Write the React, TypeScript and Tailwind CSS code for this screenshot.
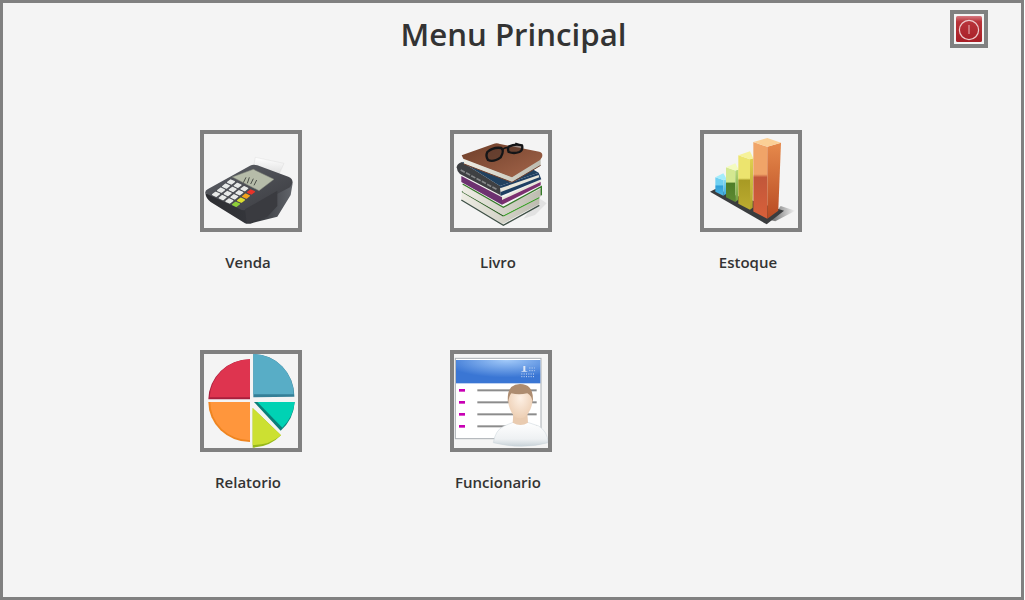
import React from "react";

// Helper: a rounded key on the payment terminal
function Key({ x, y, fill }: { x: number; y: number; fill: string }) {
  return (
    <path
      d={`M${x - 10} ${y + 1} L${x - 1} ${y - 6} L${x + 10} ${y - 1} L${x + 1} ${y + 6} Z`}
      fill={fill}
      stroke={fill}
      strokeWidth="4"
      strokeLinejoin="round"
    />
  );
}

function PosIcon() {
  const keys: React.ReactNode[] = [];
  const colored = ["#e8342a", "#f2a31c", "#dde030", "#8fd03a"];
  for (let i = 0; i < 4; i++) {
    for (let j = 0; j < 4; j++) {
      const x = 123 + j * 20 - i * 15;
      const y = 186 + j * 10 + i * 12.3;
      keys.push(<Key key={`${i}-${j}`} x={x} y={y} fill={j === 3 ? colored[i] : "#e8eae8"} />);
    }
  }
  return (
    <svg viewBox="42 42 282 282" className="w-full h-full">
      <defs>
        <linearGradient id="posBody" x1="0" y1="0" x2="1" y2="1">
          <stop offset="0" stopColor="#5d6066" />
          <stop offset="1" stopColor="#3a3b40" />
        </linearGradient>
        <linearGradient id="posFront" x1="0" y1="0" x2="1" y2="0">
          <stop offset="0" stopColor="#2c2d31" />
          <stop offset="0.6" stopColor="#36383d" />
          <stop offset="1" stopColor="#62656b" />
        </linearGradient>
        <linearGradient id="posPaper" x1="0" y1="0" x2="0" y2="1">
          <stop offset="0" stopColor="#ffffff" />
          <stop offset="1" stopColor="#d8d8d8" />
        </linearGradient>
      </defs>
      <path d="M196 112 L282 130 L262 174 L188 152 Z" fill="url(#posPaper)" stroke="#d0d0d0" />
      <path d="M46 220 Q48 236 62 246 L165 310 Q175 314 190 308 L262 290 L302 225 L308 190 L170 240 Z" fill="url(#posFront)" />
      <path d="M46 220 Q44 212 54 207 L180 137 Q190 132 202 136 L295 170 Q308 175 308 188 L300 202 L172 268 Q160 274 148 266 Z" fill="url(#posBody)" />
      <path d="M165 268 L262 212 L262 258 L232 290 L170 310 Z" fill="#3a3b40" />
      <path d="M127 171 L190 148 L252 178 L207 212 Z" fill="#b6bca9" stroke="#80857a" strokeWidth="1.5" />
      <g stroke="#4a4e48" strokeWidth="3" fill="none">
        <path d="M168 172 L160 188 M178 172 L172 190 M190 176 L182 192 M200 180 L192 196" />
      </g>
      {keys}
    </svg>
  );
}

function BooksIcon() {
  return (
    <svg viewBox="42 42 282 282" className="w-full h-full">
      <defs>
        <linearGradient id="brownCover" x1="0" y1="0" x2="1" y2="1">
          <stop offset="0" stopColor="#6e3f2a" />
          <stop offset="1" stopColor="#a4654a" />
        </linearGradient>
        <linearGradient id="pagesBook" x1="0" y1="0" x2="1" y2="0">
          <stop offset="0" stopColor="#eeede4" />
          <stop offset="1" stopColor="#bdbcb0" />
        </linearGradient>
      </defs>
      <path d="M298 235 L320 250 L285 285 L250 296 Z" fill="#e2e2e2" />
      {/* bottom book */}
      <path d="M64 238 L188 312 L298 252 L298 232 L190 285 L66 212 Z" fill="url(#pagesBook)" />
      <path d="M64 240 L190 316 L298 256" fill="none" stroke="#3f5046" strokeWidth="4" />
      <path d="M190 288 L298 232" fill="none" stroke="#36a024" strokeWidth="4" />
      <path d="M66 214 L190 288" fill="none" stroke="#2f5f28" strokeWidth="4" />
      {/* green book */}
      <path d="M68 192 L190 262 L304 205 L304 228 L190 286 L68 216 Z" fill="url(#pagesBook)" />
      <path d="M68 192 L190 262 L304 200 L304 226" fill="none" stroke="#357a28" strokeWidth="4" />
      {/* purple book */}
      <path d="M66 170 L190 232 L302 178 L302 195 L190 252 L66 188 Z" fill="#e8e6da" />
      <path d="M64 168 L186 232 L186 254 L64 186 Z" fill="#6d3270" />
      <path d="M186 254 L302 196 L302 186 L186 240 Z" fill="#7b2f70" />
      {/* dark book */}
      <path d="M50 142 Q50 132 66 126 L180 198 L182 226 L60 162 Q50 152 50 142 Z" fill="#3e4043" />
      <path d="M62 150 L170 208" fill="none" stroke="#86888a" strokeWidth="5" strokeDasharray="14 4" />
      <path d="M180 198 L296 158 L304 178 L182 228 Z" fill="#1f3f62" />
      <path d="M180 205 L296 165 L298 172 L182 216 Z" fill="#e8e6da" />
      <path d="M66 126 L180 198 L296 158 L230 120 Z" fill="#21415f" />
      {/* top book */}
      <path d="M70 114 L216 170 L302 112 L302 136 L216 187 L72 132 Z" fill="url(#pagesBook)" />
      <path d="M65 106 L160 72 Q170 68 180 72 L298 95 Q310 98 306 112 L300 120 L216 172 L70 116 Z" fill="url(#brownCover)" />
      <path d="M72 132 L216 187 L302 136" fill="none" stroke="#70402c" strokeWidth="3" />
      {/* glasses */}
      <g fill="none" stroke="#141517" strokeWidth="7">
        <path d="M142 96 Q160 80 184 84 Q194 92 182 112 Q160 128 144 120 Q136 108 142 96 Z" fill="#50342a" fillOpacity="0.55" />
        <path d="M206 80 Q226 70 246 76 Q250 90 238 96 Q222 102 206 96 Q202 86 206 80 Z" fill="#50342a" fillOpacity="0.55" />
        <path d="M186 90 Q196 80 204 84 M240 76 L226 70" strokeWidth="5" />
      </g>
    </svg>
  );
}

// Bottom edge of the chart's bars runs along this line
const barBottom = (x: number) => 215 + (x - 76) * 0.52;

function ChartIcon() {
  const bars = [
    { id: "barBlue", l: 76, m: 100, r: 110, y: 172, top: "#a4ecfb", upper: "#6fd0f2", lower: "#2f9fd8", end: "#4fb8e4", side: "#8adcf2", sideEnd: "#3aa8dc" },
    { id: "barGreen", l: 108, m: 136, r: 146, y: 142, top: "#f4fbc0", upper: "#d4e890", lower: "#4f7d28", end: "#5f8a32", side: "#b6d878", sideEnd: "#6f9e3e" },
    { id: "barYellow", l: 145, m: 180, r: 190, y: 106, top: "#f6f29a", upper: "#ece46e", lower: "#a89a24", end: "#bcac30", side: "#e0d050", sideEnd: "#b0a02a" },
    { id: "barOrange", l: 190, m: 232, r: 273, y: 66, top: "#fbd096", upper: "#f0a468", lower: "#c2573a", end: "#d8603a", side: "#e68a4c", sideEnd: "#b84a22" },
  ];
  return (
    <svg viewBox="42 42 282 282" className="w-full h-full">
      <defs>
        <linearGradient id="chartShadow" x1="0" y1="0" x2="1" y2="0">
          <stop offset="0" stopColor="#666" />
          <stop offset="1" stopColor="#f4f4f4" />
        </linearGradient>
        {bars.map((b) => (
          <React.Fragment key={b.id}>
            <linearGradient id={b.id} x1="0" y1="0" x2="0" y2="1">
              <stop offset="0" stopColor={b.upper} />
              <stop offset="0.42" stopColor={b.upper} />
              <stop offset="0.46" stopColor={b.lower} />
              <stop offset="1" stopColor={b.end} />
            </linearGradient>
            <linearGradient id={`${b.id}Side`} x1="0" y1="0" x2="0" y2="1">
              <stop offset="0" stopColor={b.side} />
              <stop offset="1" stopColor={b.sideEnd} />
            </linearGradient>
          </React.Fragment>
        ))}
      </defs>
      <path d="M240 300 L272 258 L316 272 L256 304 Z" fill="url(#chartShadow)" />
      <path d="M60 215 L76 207 L282 272 L230 313 Z" fill="#3a3c3e" />
      {bars.map((b) => {
        const dy = (b.m - b.l) * 0.34;
        const back = (b.r - b.m) * 0.3;
        return (
          <g key={b.id}>
            <path
              d={`M${b.l} ${b.y} L${b.m} ${b.y + dy} L${b.m} ${barBottom(b.m)} L${b.l} ${barBottom(b.l)} Z`}
              fill={`url(#${b.id})`}
            />
            <path
              d={`M${b.m} ${b.y + dy} L${b.r} ${b.y + dy - back} L${b.r - (b.r - b.m) * 0.2} ${barBottom(b.m) - 24 * ((b.r - b.m) / 41)} L${b.m} ${barBottom(b.m)} Z`}
              fill={`url(#${b.id}Side)`}
            />
            <path
              d={`M${b.l} ${b.y} L${b.m} ${b.y - 12} L${b.r} ${b.y + dy - back} L${b.m} ${b.y + dy} Z`}
              fill={b.top}
            />
          </g>
        );
      })}
    </svg>
  );
}

function PieIcon() {
  return (
    <svg viewBox="42 42 282 282" className="w-full h-full">
      <path d="M180 58 A125 122 0 0 0 55 178 L180 178 Z" fill="#a81f3c" />
      <path d="M180 58 A122 118 0 0 0 59 172 L180 172 Z" fill="#de344f" />
      <path d="M190 42 A124 126 0 0 1 313 170 L190 172 Z" fill="#347f97" />
      <path d="M190 42 A122 122 0 0 1 311 163 L190 163 Z" fill="#58adc6" />
      <path d="M55 186 L180 186 L180 306 A125 120 0 0 1 55 186 Z" fill="#ef8520" />
      <path d="M61 186 L180 186 L180 301 A120 114 0 0 1 61 186 Z" fill="#ff963c" />
      <path d="M192 186 L314 186 A124 124 0 0 1 272 272 Z" fill="#0a7f78" />
      <path d="M202 186 L314 186 A124 124 0 0 1 277 263 Z" fill="#00d2b4" />
      <path d="M188 204 L273 286 A122 122 0 0 1 188 323 Z" fill="#96b81a" />
      <path d="M188 204 L273 286 A124 124 0 0 1 188 315 Z" fill="#cce032" />
    </svg>
  );
}

function StaffIcon() {
  const rows = [151, 187, 223, 259];
  return (
    <svg viewBox="42 42 282 282" className="w-full h-full">
      <defs>
        <radialGradient id="headerBlue" cx="0.6" cy="0" r="0.75">
          <stop offset="0" stopColor="#a2caf9" />
          <stop offset="1" stopColor="#3a76d4" />
        </radialGradient>
        <radialGradient id="faceSkin" cx="0.5" cy="0.4" r="0.6">
          <stop offset="0" stopColor="#fdf0e4" />
          <stop offset="1" stopColor="#edcfb4" />
        </radialGradient>
        <linearGradient id="shirt" x1="0" y1="0" x2="0" y2="1">
          <stop offset="0" stopColor="#ffffff" />
          <stop offset="0.7" stopColor="#eef1f3" />
          <stop offset="1" stopColor="#c8d2d8" />
        </linearGradient>
      </defs>
      <rect x="46" y="55" width="257" height="241" fill="#fff" stroke="#a8adb2" strokeWidth="3" />
      <rect x="48" y="60" width="253" height="70" fill="url(#headerBlue)" />
      <path d="M242 95 L250 92 L250 78 L256 78 L256 92 L264 95 Z" fill="#dfe8f6" />
      <path d="M244 102 H284 M244 110 H284 M268 84 H284 M268 92 H284" stroke="#cfdcf3" strokeWidth="3" strokeDasharray="3 4" />
      {rows.map((y) => (
        <g key={y}>
          <rect x="57" y={y - 4} width="18" height="8" fill="#c800b4" />
          <rect x="112" y={y - 3} width="178" height="6" fill="#8c8c8c" />
        </g>
      ))}
      <path d="M160 308 Q166 270 192 258 L222 246 L260 246 L296 258 Q322 274 325 308 Q245 330 160 308 Z" fill="url(#shirt)" stroke="#c9d3d8" strokeWidth="1.5" />
      <path d="M220 220 L262 220 L264 248 Q242 262 218 248 Z" fill="#e9cbb0" />
      <path d="M204 178 Q204 134 240 134 Q278 134 278 178 Q276 212 256 230 Q240 240 224 230 Q206 212 204 178 Z" fill="url(#faceSkin)" />
      <path d="M204 190 Q198 132 240 132 Q284 132 278 190 Q276 166 262 160 Q236 166 214 160 Q206 170 204 190 Z" fill="#ad8c70" />
    </svg>
  );
}

function PowerIcon() {
  return (
    <svg viewBox="0 0 26 26" className="w-full h-full">
      <defs>
        <linearGradient id="powerRed" x1="0" y1="0" x2="0" y2="1">
          <stop offset="0" stopColor="#d67880" />
          <stop offset="0.22" stopColor="#b8343a" />
          <stop offset="1" stopColor="#a81e26" />
        </linearGradient>
      </defs>
      <rect x="0" y="0" width="26" height="26" rx="1.5" fill="url(#powerRed)" />
      <circle cx="13" cy="14" r="9.6" fill="none" stroke="#edcccd" strokeWidth="1.2" />
      <path d="M13 9 V18" stroke="#e8b8ba" strokeWidth="1" />
    </svg>
  );
}

const items = [
  { label: "Venda", icon: <PosIcon /> },
  { label: "Livro", icon: <BooksIcon /> },
  { label: "Estoque", icon: <ChartIcon /> },
  { label: "Relatorio", icon: <PieIcon /> },
  { label: "Funcionario", icon: <StaffIcon /> },
];

export default function App() {
  return (
    <div className="w-[1024px] h-[600px] bg-[#f4f4f4] border-[3px] border-[#808080] text-[#333333] font-['Open_Sans',sans-serif] overflow-hidden">
      {/* Title bar */}
      <div className="grid grid-cols-[1fr_auto_1fr] pt-[7px] h-[127px]">
        <div />
        <h1 className="text-[31.2px] leading-[48px] font-semibold ml-[3px]">Menu Principal</h1>
        <button className="justify-self-end self-start w-[38px] h-[38px] mr-[33px] border-[4px] border-[#808080] flex items-center justify-center">
          <span className="w-[26px] h-[26px] block">
            <PowerIcon />
          </span>
        </button>
      </div>

      {/* Menu tiles */}
      <div className="grid grid-cols-[250px_250px_250px] auto-rows-[220px] pl-[120px]">
        {items.map((item) => (
          <div key={item.label} className="flex flex-col items-center">
            <div className="w-[102px] h-[102px] ml-[6px] border-[4px] border-[#808080]">{item.icon}</div>
            <span className="mt-[20px] text-[15px] leading-[20px] font-[560]">{item.label}</span>
          </div>
        ))}
      </div>
    </div>
  );
}
